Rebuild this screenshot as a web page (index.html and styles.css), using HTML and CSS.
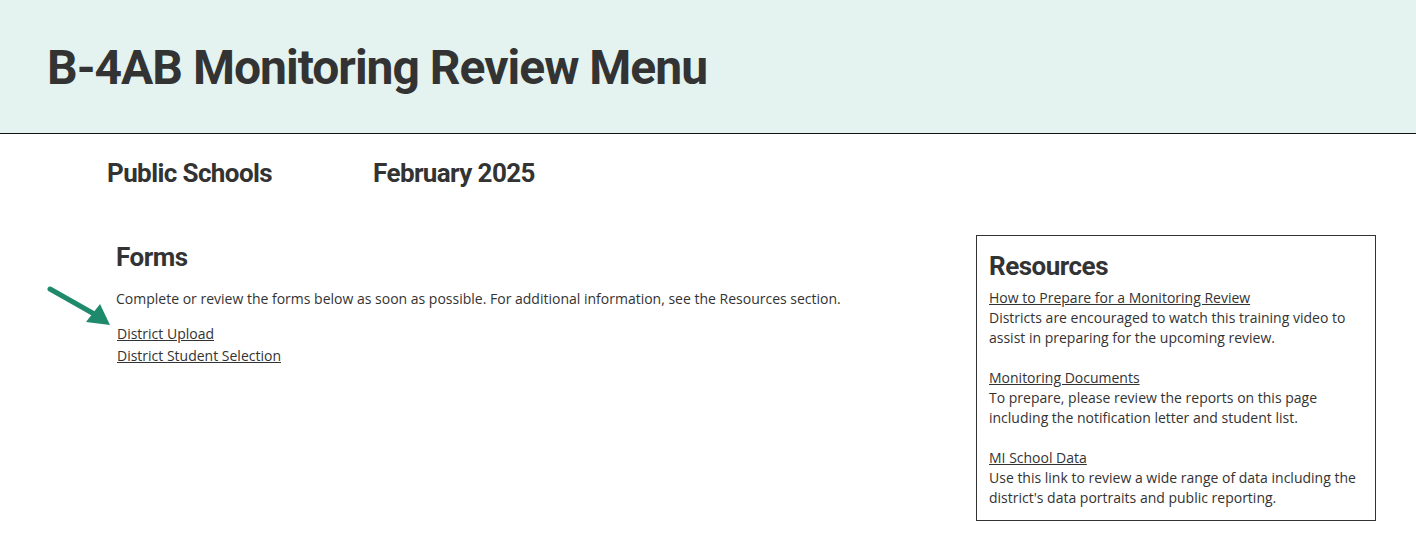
FILE: index.html
```html
<!DOCTYPE html>
<html lang="en">
<head>
<meta charset="utf-8">
<title>B-4AB Monitoring Review Menu</title>
<link rel="stylesheet" href="styles.css">
</head>
<body>
<header class="banner">
  <h1 class="title">B-4AB Monitoring Review Menu</h1>
</header>
<div class="meta">
  <span class="meta-item">Public Schools</span>
  <span class="meta-item">February 2025</span>
</div>
<main class="content">
  <section class="forms">
    <h2 class="section-title">Forms</h2>
    <p class="intro">Complete or review the forms below as soon as possible. For additional information, see the Resources section.</p>
    <ul class="link-list">
      <li class="arrow-item">
        <svg class="arrow" width="70" height="44" viewBox="0 0 70 44" aria-hidden="true">
          <line x1="4" y1="4" x2="50" y2="30" stroke="#1f8a6b" stroke-width="5" stroke-linecap="round"/>
          <polygon points="64,40 40,37 54,19" fill="#1f8a6b"/>
        </svg>
        <a href="#">District Upload</a>
      </li>
      <li><a href="#">District Student Selection</a></li>
    </ul>
  </section>
  <aside class="resources">
    <h2 class="section-title res-title">Resources</h2>
    <div class="res-item">
      <a href="#">How to Prepare for a Monitoring Review</a>
      <p>Districts are encouraged to watch this training video to assist in preparing for the upcoming review.</p>
    </div>
    <div class="res-item">
      <a href="#">Monitoring Documents</a>
      <p>To prepare, please review the reports on this page including the notification letter and student list.</p>
    </div>
    <div class="res-item">
      <a href="#">MI School Data</a>
      <p>Use this link to review a wide range of data including the district's data portraits and public reporting.</p>
    </div>
  </aside>
</main>
</body>
</html>
```

FILE: styles.css
```css
html, body {
  margin: 0;
  padding: 0;
  background: #ffffff;
  color: #333333;
  font-family: "Open Sans", "Liberation Sans", sans-serif;
  font-size: 14px;
}

.banner {
  background: #e4f3f0;
  height: 134px;
  border-bottom: 1px solid #111111;
  display: flex;
  align-items: center;
  padding-left: 47px;
  box-sizing: border-box;
}

.title {
  margin: 0;
  font-family: Roboto, "Liberation Sans", sans-serif;
  font-weight: 700;
  font-size: 48px;
  color: #333333;
  letter-spacing: -1px;
  position: relative;
  top: 1px;
}

.meta {
  display: flex;
  gap: 101px;
  padding: 24px 0 0 107px;
  height: 60px;
  box-sizing: border-box;
  font-family: Roboto, "Liberation Sans", sans-serif;
  font-weight: 700;
  font-size: 26px;
  letter-spacing: -0.6px;
  color: #333333;
  line-height: 30px;
}

.content {
  display: flex;
  justify-content: space-between;
  padding: 40px 40px 0 116px;
}

.forms {
  flex: 1;
  padding-top: 8px;
}

.section-title {
  margin: 0;
  font-family: Roboto, "Liberation Sans", sans-serif;
  font-weight: 700;
  font-size: 26px;
  letter-spacing: -0.5px;
  color: #333333;
  line-height: 30px;
}

.intro {
  margin: 17px 0 0;
  line-height: 20px;
}

.link-list {
  list-style: none;
  margin: 14px 0 0;
  padding: 0;
  line-height: 22px;
}

.arrow-item {
  position: relative;
}

.arrow {
  position: absolute;
  left: -70px;
  top: -38px;
}

a {
  color: #333333;
  text-decoration: underline;
}

.link-list a {
  padding-left: 1px;
}

.resources {
  width: 400px;
  box-sizing: border-box;
  border: 1px solid #333333;
  padding: 15px 12px 12px 12px;
  line-height: 20px;
  margin-top: 1px;
}

.res-title {
  margin-bottom: 7px;
}

.res-item {
  margin-bottom: 20px;
}

.res-item:last-child {
  margin-bottom: 0;
}

.res-item p {
  margin: 0;
}
```
